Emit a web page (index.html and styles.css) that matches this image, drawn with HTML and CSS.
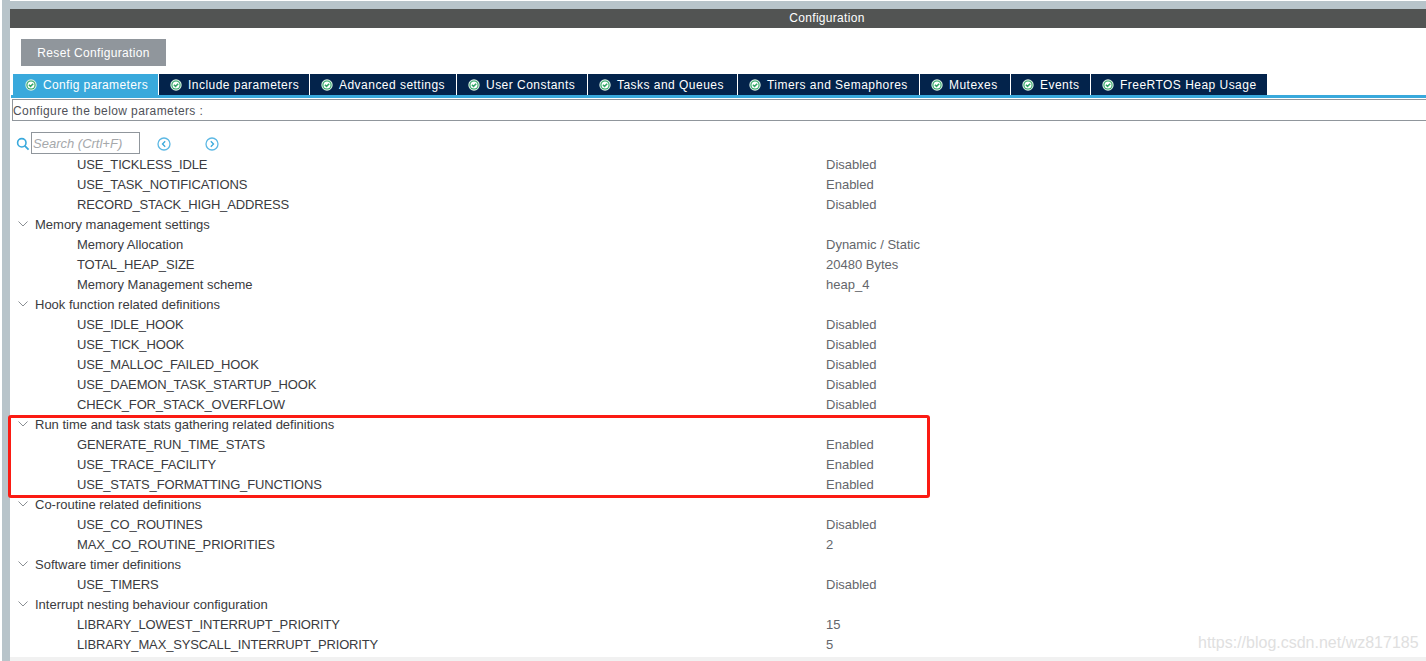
FILE: index.html
```html
<!DOCTYPE html>
<html lang="en">
<head>
<meta charset="utf-8">
<title>Configuration</title>
<link rel="stylesheet" href="styles.css">
</head>
<body>
<svg class="defs" width="0" height="0" aria-hidden="true">
  <symbol id="ok" viewBox="0 0 12 12">
    <circle cx="6" cy="6" r="5.7" fill="#d8efe2"/>
    <circle cx="6" cy="6" r="4.6" fill="#2fa565"/>
    <circle cx="6" cy="6" r="3.5" fill="#fff"/>
    <path d="M3.9 5.8 5.5 7.4 8.2 4.7" fill="none" stroke="#2fa565" stroke-width="1.5"/>
  </symbol>
</svg>
<div class="app">
  <div class="rail"></div>
  <main class="main">
    <h1 class="title">Configuration</h1>
    <div class="toolbar"><button class="reset">Reset Configuration</button></div>
    <nav class="tabs">
      <a class="tab tab-active w1"><svg class="ok"><use href="#ok"/></svg>Config parameters</a>
      <a class="tab w2"><svg class="ok"><use href="#ok"/></svg>Include parameters</a>
      <a class="tab w3"><svg class="ok"><use href="#ok"/></svg>Advanced settings</a>
      <a class="tab w4"><svg class="ok"><use href="#ok"/></svg>User Constants</a>
      <a class="tab w5"><svg class="ok"><use href="#ok"/></svg>Tasks and Queues</a>
      <a class="tab w6"><svg class="ok"><use href="#ok"/></svg>Timers and Semaphores</a>
      <a class="tab w7"><svg class="ok"><use href="#ok"/></svg>Mutexes</a>
      <a class="tab w8"><svg class="ok"><use href="#ok"/></svg>Events</a>
      <a class="tab w9"><svg class="ok"><use href="#ok"/></svg>FreeRTOS Heap Usage</a>
    </nav>
    <div class="hint">Configure the below parameters :</div>
    <div class="search">
      <svg class="s-ico" viewBox="0 0 14 14"><circle cx="5.8" cy="5.8" r="4.2" fill="none" stroke="#39a9dc" stroke-width="1.6"/><path d="M8.8 8.8 12.6 12.6" stroke="#39a9dc" stroke-width="1.8"/></svg>
      <div class="s-box">Search (Crtl+F)</div>
      <svg class="s-nav s-prev" viewBox="0 0 14 14"><circle cx="7" cy="7" r="6" fill="none" stroke="#5cb8e4" stroke-width="1.3"/><path d="M8.2 4.3 5.500 7 8.2 9.7" fill="none" stroke="#39a9dc" stroke-width="1.3"/></svg>
      <svg class="s-nav s-next" viewBox="0 0 14 14"><circle cx="7" cy="7" r="6" fill="none" stroke="#5cb8e4" stroke-width="1.3"/><path d="M5.800 4.3 8.500 7 5.800 9.7" fill="none" stroke="#39a9dc" stroke-width="1.3"/></svg>
    </div>
    <div class="tree">
      <div class="row"><span class="name">USE_TICKLESS_IDLE</span><span class="val">Disabled</span></div>
      <div class="row"><span class="name">USE_TASK_NOTIFICATIONS</span><span class="val">Enabled</span></div>
      <div class="row"><span class="name">RECORD_STACK_HIGH_ADDRESS</span><span class="val">Disabled</span></div>
      <div class="row group"><svg class="chev" viewBox="0 0 10 6"><path d="M.5.5 5 5 9.500.5" fill="none" stroke="#8a8f94"/></svg>Memory management settings</div>
      <div class="row"><span class="name mixed">Memory Allocation</span><span class="val">Dynamic / Static</span></div>
      <div class="row"><span class="name">TOTAL_HEAP_SIZE</span><span class="val">20480 Bytes</span></div>
      <div class="row"><span class="name mixed">Memory Management scheme</span><span class="val">heap_4</span></div>
      <div class="row group"><svg class="chev" viewBox="0 0 10 6"><path d="M.5.5 5 5 9.500.5" fill="none" stroke="#8a8f94"/></svg>Hook function related definitions</div>
      <div class="row"><span class="name">USE_IDLE_HOOK</span><span class="val">Disabled</span></div>
      <div class="row"><span class="name">USE_TICK_HOOK</span><span class="val">Disabled</span></div>
      <div class="row"><span class="name">USE_MALLOC_FAILED_HOOK</span><span class="val">Disabled</span></div>
      <div class="row"><span class="name">USE_DAEMON_TASK_STARTUP_HOOK</span><span class="val">Disabled</span></div>
      <div class="row"><span class="name">CHECK_FOR_STACK_OVERFLOW</span><span class="val">Disabled</span></div>
      <div class="row group"><svg class="chev" viewBox="0 0 10 6"><path d="M.5.5 5 5 9.500.5" fill="none" stroke="#8a8f94"/></svg>Run time and task stats gathering related definitions</div>
      <div class="row"><span class="name">GENERATE_RUN_TIME_STATS</span><span class="val">Enabled</span></div>
      <div class="row"><span class="name">USE_TRACE_FACILITY</span><span class="val">Enabled</span></div>
      <div class="row"><span class="name">USE_STATS_FORMATTING_FUNCTIONS</span><span class="val">Enabled</span></div>
      <div class="row group"><svg class="chev" viewBox="0 0 10 6"><path d="M.5.5 5 5 9.500.5" fill="none" stroke="#8a8f94"/></svg>Co-routine related definitions</div>
      <div class="row"><span class="name">USE_CO_ROUTINES</span><span class="val">Disabled</span></div>
      <div class="row"><span class="name">MAX_CO_ROUTINE_PRIORITIES</span><span class="val">2</span></div>
      <div class="row group"><svg class="chev" viewBox="0 0 10 6"><path d="M.5.5 5 5 9.500.5" fill="none" stroke="#8a8f94"/></svg>Software timer definitions</div>
      <div class="row"><span class="name">USE_TIMERS</span><span class="val">Disabled</span></div>
      <div class="row group"><svg class="chev" viewBox="0 0 10 6"><path d="M.5.5 5 5 9.500.5" fill="none" stroke="#8a8f94"/></svg>Interrupt nesting behaviour configuration</div>
      <div class="row"><span class="name">LIBRARY_LOWEST_INTERRUPT_PRIORITY</span><span class="val">15</span></div>
      <div class="row"><span class="name">LIBRARY_MAX_SYSCALL_INTERRUPT_PRIORITY</span><span class="val">5</span></div>
    </div>
    <div class="footer-line"></div>
  </main>
</div>
<div class="highlight"></div>
<div class="watermark">https://blog.csdn.net/wz817185</div>
</body>
</html>
```
FILE: styles.css
```css
* { box-sizing: border-box; }
html, body { margin: 0; padding: 0; height: 661px; overflow: hidden; background: #fff; }
body { font-family: "Liberation Sans", Arial, sans-serif; position: relative; }
.defs { position: absolute; }
.app { display: flex; height: 661px; padding-left: 2px; }
.rail { width: 8px; background: #b8c4ca; flex: none; }
.main { flex: 1; min-width: 0; display: flex; flex-direction: column; padding-top: 1px; }
.title {
  margin: 0; height: 27px; padding: 8px 0 0 218px;
  background: linear-gradient(#b8c4ca 0 8px, #525453 8px);
  color: #fff; font-size: 12px; font-weight: 400; line-height: 19px; text-align: center;
  letter-spacing: .3px;
}
.toolbar { height: 47px; padding: 11px 0 0 11px; }
.reset {
  display: block; width: 145px; height: 27px; border: 0; padding: 0;
  background: #90969c; color: #fff; font: 12px "Liberation Sans", Arial, sans-serif; letter-spacing: .33px;
}
.tabs {
  display: flex; height: 24px; margin-left: 1px; padding-left: 2px;
  border-bottom: 3px solid #39a9dc; flex: none;
}
.tab {
  display: flex; align-items: center; height: 21px; padding-left: 11px; margin-right: 1px;
  background: #03234b; color: #fff; font-size: 12px; letter-spacing: .47px; white-space: nowrap;
}
.tab-active { background: #39a9dc; padding-left: 12px; letter-spacing: .37px; }
.w1 { width: 145px; } .w2 { width: 150px; } .w3 { width: 146px; } .w4 { width: 130px; }
.w5 { width: 149px; } .w6 { width: 181px; } .w7 { width: 90px; } .w8 { width: 79px; } .w9 { width: 176px; }
.ok { width: 12px; height: 12px; margin-right: 6px; flex: none; }
.hint {
  height: 22px; margin: 1px 0 0 2px; flex: none; padding-top: 2px;
  border: 1px solid #90969c; border-right: 0;
  color: #4f5158; font-size: 12px; line-height: 18px; letter-spacing: .4px;
}
.search { display: flex; align-items: center; height: 22px; margin-top: 11px; padding-left: 6px; flex: none; }
.s-ico { width: 14px; height: 14px; flex: none; margin: 1px 1px 0 0; }
.s-box {
  width: 109px; height: 22px; border: 1px solid #90969c; margin-right: 17px; padding: 1px 0 0 1px;
  color: #a5a8ab; font-size: 13px; font-style: italic; line-height: 20px;
}
.s-nav { width: 14px; height: 14px; flex: none; margin-top: 1px; }
.s-prev { margin-right: 34px; }
.tree { flex: none; }
.row {
  display: flex; align-items: center; height: 20px; padding-left: 67px;
  font-size: 13px; color: #3a3b40; white-space: nowrap;
}
.name { width: 749px; flex: none; letter-spacing: -.15px; }
.mixed { letter-spacing: 0; }
.val { color: #64666b; }
.group { padding-left: 8px; }
.chev { width: 10px; height: 6px; margin-right: 7px; flex: none; }
.footer-line { height: 4px; margin-top: 3px; background: #f1f1f1; flex: none; }
.highlight {
  position: absolute; left: 8px; top: 415px; width: 922px; height: 83px;
  border: 3px solid #fb1b13; border-radius: 3px;
}
.watermark {
  position: absolute; left: 1198px; top: 634px;
  color: #e0e0e0; font-size: 16px; line-height: 18px;
}
```
